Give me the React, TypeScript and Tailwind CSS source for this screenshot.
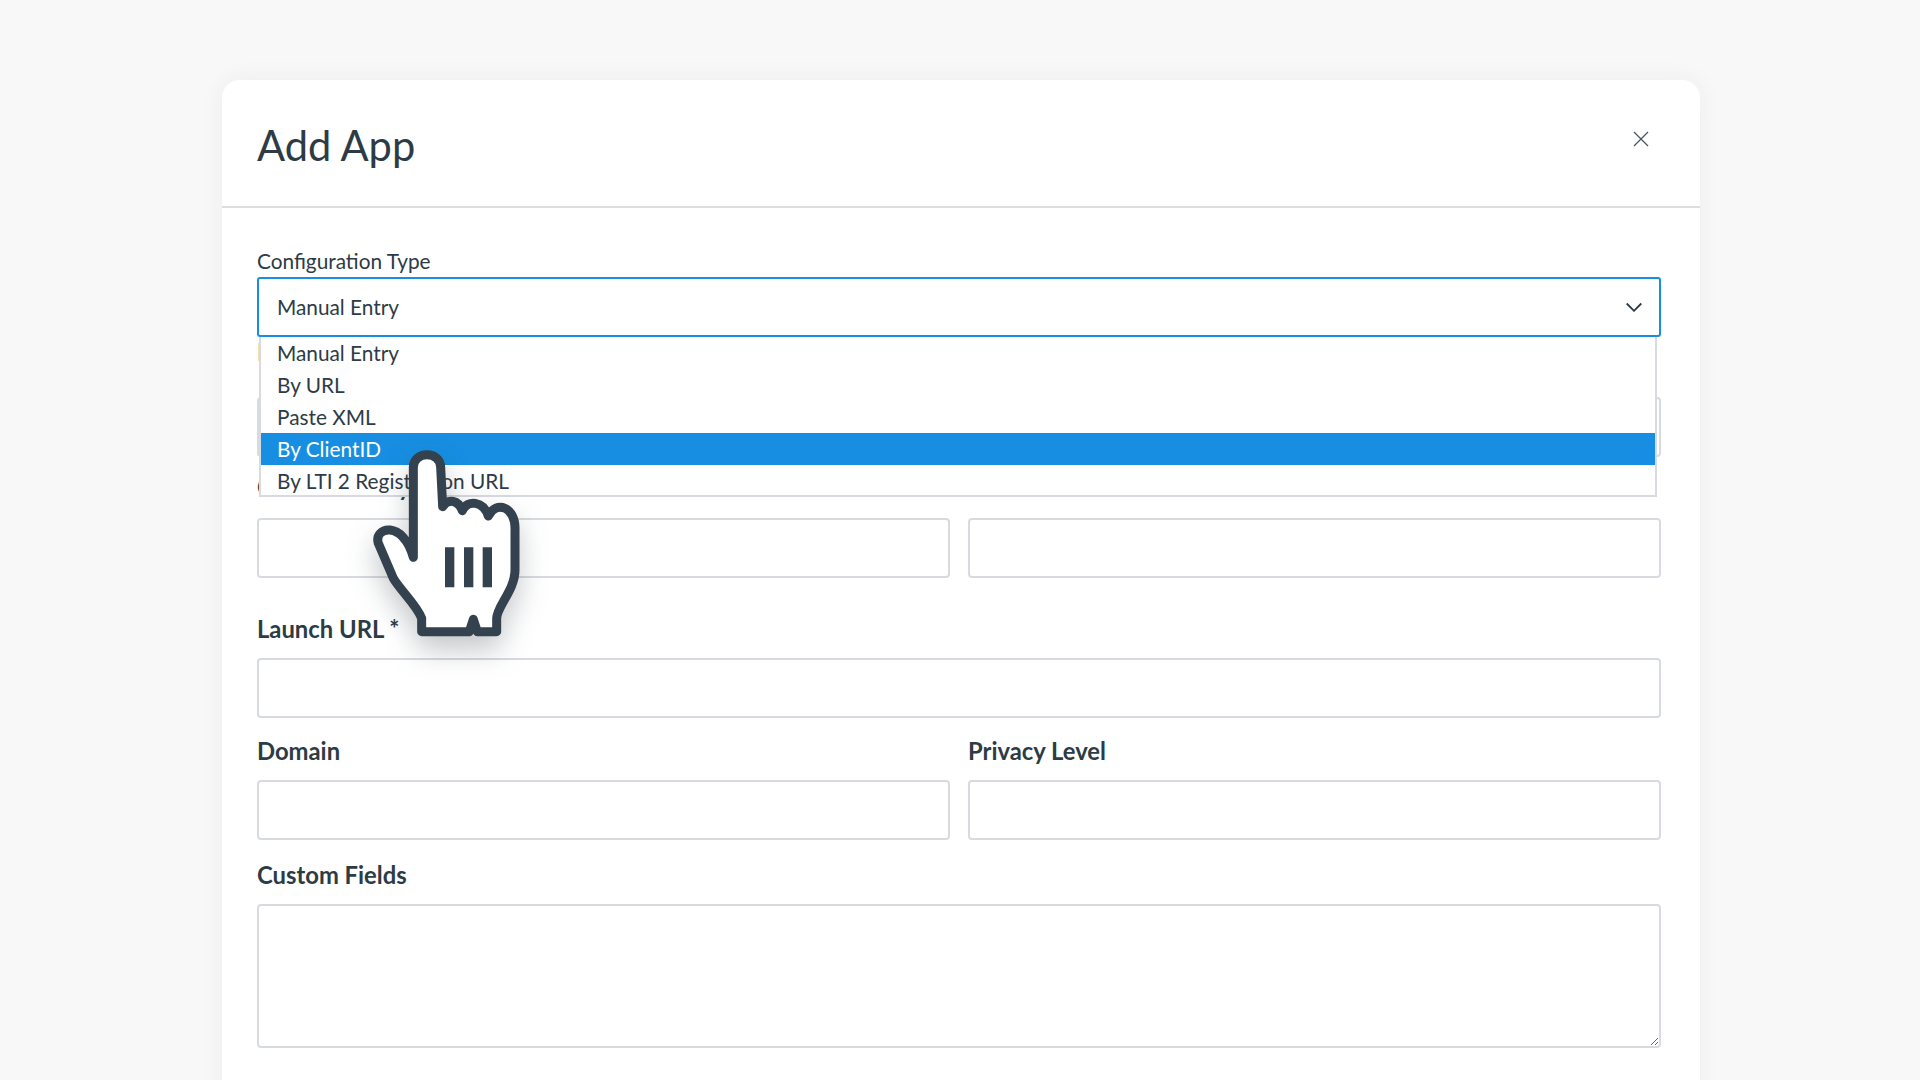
const fieldClass = "block w-full h-[60px] rounded-[4px] border-2 border-[#d7dade] bg-white";
const labelClass = "block text-[23.8px] leading-[30px] font-bold text-[#2d3b45]";

const options = ["Manual Entry", "By URL", "Paste XML", "By ClientID", "By LTI 2 Registration URL"];

function Hand() {
  return (
    <svg
      className="absolute left-[367px] top-[443px] z-20 drop-shadow-[0_14px_14px_rgba(45,59,69,0.28)]"
      width="160"
      height="200"
      viewBox="381 339 480 600"
      fill="none"
    >
      <path
        d="M520 682 L520 412 C520 362 602 362 602 412 L608 530 C625 505 655 510 667 542 C682 508 730 512 745 558 C768 510 828 530 825 600 L825 720 C825 780 770 830 770 865 L770 905 L712 905 L700 868 L688 905 L545 905 L545 865 C530 825 480 780 460 745 L415 640 C400 590 490 570 520 682 Z"
        fill="#fff"
        stroke="#34414e"
        strokeWidth="27"
        strokeLinejoin="round"
      />
      <path d="M615 652h28v120h-28zM672 652h28v120h-28zM728 652h28v120h-28z" fill="#34414e" />
    </svg>
  );
}

export default function App() {
  return (
    <div className="relative h-[1080px] overflow-hidden bg-[#f8f8f8] pl-[222px] pt-[80px] font-['Lato',sans-serif] text-[#2d3b45]">
      <div className="h-[1100px] w-[1478px] rounded-[18px] bg-white shadow-[0_0_24px_rgba(45,59,69,0.06)]">
        <header className="flex h-[128px] items-start justify-between border-b-2 border-[#dcdee1] pl-[35px] pr-[51px]">
          <h1 className="pt-[37px] text-[41.6px] leading-[56px] text-[#2d3b45]">Add App</h1>
          <button className="mt-[51px]" aria-label="Close">
            <svg width="16" height="16" viewBox="0 0 16 16" fill="none" stroke="#4a5661" strokeWidth="1.3">
              <path d="M1 1l14 14M15 1L1 15" />
            </svg>
          </button>
        </header>

        <form className="pl-[35px] pr-[39px] pt-[41px]">
          <label className="mb-[4px] block text-[20.8px] leading-[24px] text-[#2d3b45]">Configuration Type</label>
          <div className="relative">
            <div className="flex h-[60px] items-center justify-between rounded-[3px] border-2 border-[#178ee1] pl-[18px] pr-[17px] text-[20.8px]">
              <span>Manual Entry</span>
              <svg width="16" height="10" viewBox="0 0 16 10" fill="none" stroke="#2d3b45" strokeWidth="1.8">
                <path d="M0.7 1.5l7.3 7.3 7.3-7.3" />
              </svg>
            </div>
            <ul className="absolute left-[2px] right-[4px] top-full z-10 h-[160px] overflow-hidden border-x-2 border-b-2 border-[#d7dade] bg-white text-[20.8px] leading-[32px]">
              {options.map((o) => (
                <li key={o} className={o === "By ClientID" ? "h-[32px] bg-[#178ee1] pl-[16px] text-white" : "h-[32px] pl-[16px]"}>
                  {o}
                </li>
              ))}
            </ul>
          </div>

          <label className={`${labelClass} mt-[0px] mb-[30px]`}>Name *</label>
          <input className={fieldClass} />

          <div className="mt-[15px] grid grid-cols-2 gap-x-[18px]">
            <div>
              <label className={`${labelClass} mb-[16px]`}>Consumer Key</label>
              <input className={fieldClass} />
            </div>
            <div>
              <label className={`${labelClass} mb-[16px]`}>Shared Secret</label>
              <input className={fieldClass} />
            </div>
          </div>

          <label className={`${labelClass} mt-[36px] mb-[14px]`}>Launch URL *</label>
          <input className={fieldClass} />

          <div className="mt-[18px] grid grid-cols-2 gap-x-[18px]">
            <div>
              <label className={`${labelClass} mb-[14px]`}>Domain</label>
              <input className={fieldClass} />
            </div>
            <div>
              <label className={`${labelClass} mb-[14px]`}>Privacy Level</label>
              <input className={fieldClass} />
            </div>
          </div>

          <label className={`${labelClass} mt-[20px] mb-[14px]`}>Custom Fields</label>
          <textarea className="block h-[144px] w-full rounded-[4px] border-2 border-[#d7dade] bg-white" />
        </form>
      </div>
      <Hand />
    </div>
  );
}
